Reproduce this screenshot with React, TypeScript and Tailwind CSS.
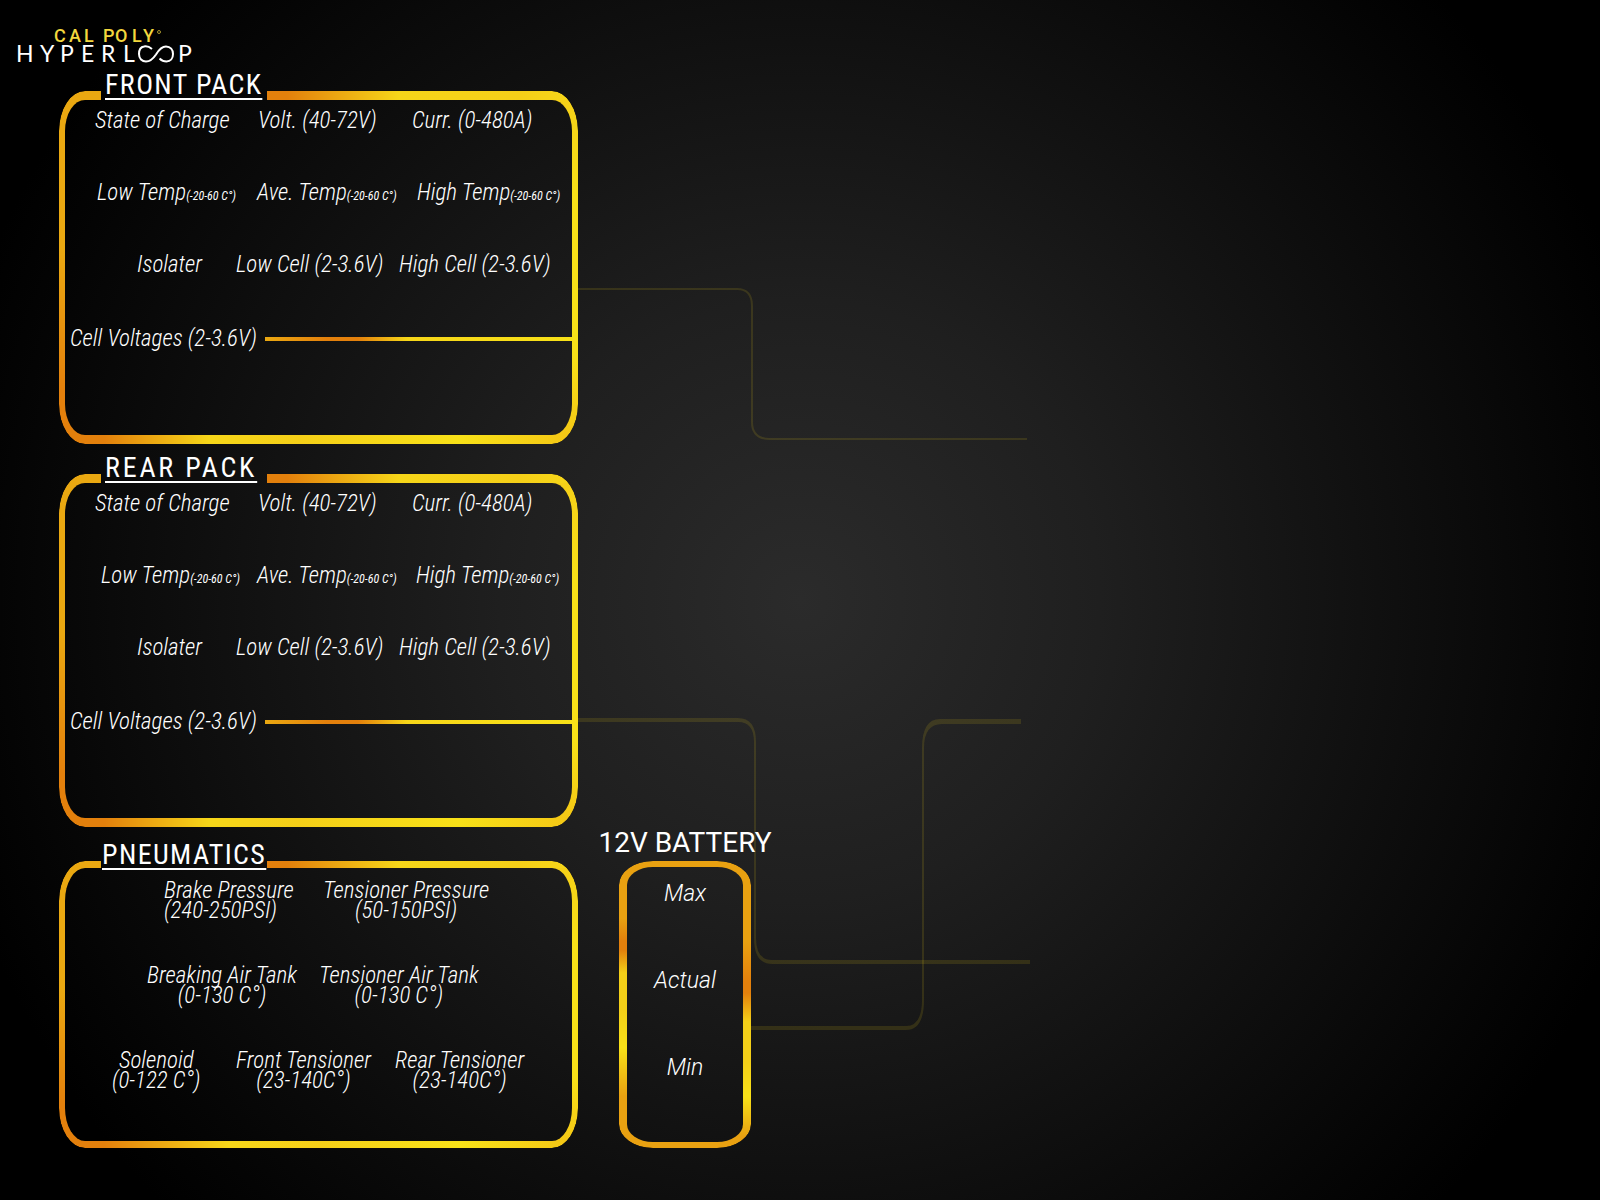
import type { ReactNode } from "react";

const RING =
  "[mask:linear-gradient(#000_0_0)_padding-box_exclude,linear-gradient(#000_0_0)_border-box]";

const PACK_FRAME =
  "border-x-[6px] border-y-[9px] [background:linear-gradient(90deg,#eaa811_42px,transparent_42px,transparent_208px,#e3800c_208px,#e3800c_228px,#f6d619_340px,#f5cf18_460px,#f7d819)_0_0/100%_9px_no-repeat_border-box,linear-gradient(90deg,#e3800c_45px,#f6d619_150px,#f5cf18_240px,#f8e118_400px,#f4c515)_0_100%/100%_9px_no-repeat_border-box,linear-gradient(180deg,#eaa811_45%,#e3800c_85%)_0_0/42px_100%_no-repeat_border-box,linear-gradient(180deg,#f5cf18,#f8e118_30%,#f8e118_75%,#f4c515)_100%_0/42px_100%_no-repeat_border-box]";

const PNEUMATICS_FRAME =
  "border-x-[6px] border-y-[7px] [background:linear-gradient(90deg,#eaa811_42px,transparent_42px,transparent_208px,#e3800c_208px,#e3800c_228px,#f6d619_340px,#f5cf18_460px,#f7d819)_0_0/100%_7px_no-repeat_border-box,linear-gradient(90deg,#e3800c_45px,#f6d619_170px,#f5cf18_260px,#f8e118_400px,#f4c515)_0_100%/100%_7px_no-repeat_border-box,linear-gradient(180deg,#eaa811_45%,#e3800c_85%)_0_0/42px_100%_no-repeat_border-box,linear-gradient(180deg,#f5cf18,#f8e118_30%,#f8e118_75%,#f4c515)_100%_0/42px_100%_no-repeat_border-box]";

const BATTERY_FRAME =
  "border-x-[8px] border-y-[6px] [background:linear-gradient(180deg,#e9a111_20%,#e3800c_28%,#e3800c_31%,#f3cf18_39%,#f3cf18_52%,#f8e118_65%,#e9a111_82%)_0_0/50%_100%_no-repeat_border-box,linear-gradient(180deg,#e9a111_28%,#e3800c_42%,#e3800c_46%,#f3cf18_56%,#f3cf18_70%,#f8e118_82%,#e9a111_96%)_100%_0/50%_100%_no-repeat_border-box]";

type PanelProps = {
  title: string;
  tracking: string;
  titleMargin: string;
  frame: string;
  children: ReactNode;
};

function Panel({ title, tracking, titleMargin, frame, children }: PanelProps) {
  return (
    <section className="relative">
      <div
        aria-hidden="true"
        className={`absolute inset-x-0 top-5 bottom-0 rounded-[26px/40px] border-transparent ${RING} ${frame}`}
      />
      <h2
        className={`relative text-[28px] leading-7 underline decoration-2 underline-offset-4 ${titleMargin} ${tracking}`}
      >
        {title}
      </h2>
      {children}
    </section>
  );
}

function Temp({ label }: { label: string }) {
  return (
    <span>
      {label}
      <small className="text-[12px] leading-none font-normal">(-20-60 C°)</small>
    </span>
  );
}

function Pack({ title, tracking, tempRow }: { title: string; tracking: string; tempRow: string }) {
  return (
    <Panel title={title} tracking={tracking} titleMargin="ml-[46px]" frame={PACK_FRAME}>
      <div className="relative flex flex-col gap-12 pt-[10px] pb-[93px] text-[23px] leading-6 font-light italic">
        <div className="grid grid-cols-[163px_154px_auto] pl-9">
          <span>State of Charge</span>
          <span>Volt. (40-72V)</span>
          <span>Curr. (0-480A)</span>
        </div>
        <div className={`grid ${tempRow}`}>
          <Temp label="Low Temp" />
          <Temp label="Ave. Temp" />
          <Temp label="High Temp" />
        </div>
        <div className="grid grid-cols-[99px_163px_auto] pl-[78px]">
          <span>Isolater</span>
          <span>Low Cell (2-3.6V)</span>
          <span>High Cell (2-3.6V)</span>
        </div>
        <div className="flex items-center gap-1 pt-[2px] pr-1 pl-[11px]">
          <span className="w-[191px]">Cell Voltages (2-3.6V)</span>
          <span className="h-1 flex-1 bg-[linear-gradient(90deg,#eaa811,#e3800c_20%,#e3800c_30%,#f6d619_46%,#f8e118)]" />
        </div>
      </div>
    </Panel>
  );
}

function Reading({ label, range, align }: { label: string; range: string; align: string }) {
  return (
    <span className={`flex w-max flex-col ${align}`}>
      <span>{label}</span>
      <span>{range}</span>
    </span>
  );
}

function Pneumatics() {
  return (
    <Panel
      title="PNEUMATICS"
      tracking="tracking-wider"
      titleMargin="ml-[43px]"
      frame={PNEUMATICS_FRAME}
    >
      <div className="relative flex flex-col gap-[45px] pt-3 pb-[57px] text-[23px] leading-5 font-light italic">
        <div className="grid grid-cols-[159px_auto] pl-[105px]">
          <Reading label="Brake Pressure" range="(240-250PSI)" align="items-start" />
          <Reading label="Tensioner Pressure" range="(50-150PSI)" align="items-center" />
        </div>
        <div className="grid grid-cols-[172px_auto] pl-[88px]">
          <Reading label="Breaking Air Tank" range="(0-130 C°)" align="items-center" />
          <Reading label="Tensioner Air Tank" range="(0-130 C°)" align="items-center" />
        </div>
        <div className="grid grid-cols-[124px_159px_auto] pl-[53px]">
          <Reading label="Solenoid" range="(0-122 C°)" align="items-center" />
          <Reading label="Front Tensioner" range="(23-140C°)" align="items-center" />
          <Reading label="Rear Tensioner" range="(23-140C°)" align="items-center" />
        </div>
      </div>
    </Panel>
  );
}

function Battery() {
  return (
    <section className="flex w-[182px] flex-col items-center gap-1 font-[Roboto,sans-serif]">
      <h2 className="text-[28px] leading-7 whitespace-nowrap">12V BATTERY</h2>
      <div className="relative flex h-[287px] w-[132px] flex-col items-center gap-[63px] pt-[21px] text-[23px] leading-6 font-light italic">
        <div
          aria-hidden="true"
          className={`absolute inset-0 rounded-[34px/24px] border-transparent ${RING} ${BATTERY_FRAME}`}
        />
        <span>Max</span>
        <span>Actual</span>
        <span>Min</span>
      </div>
    </section>
  );
}

function Logo() {
  return (
    <svg width="200" height="70" viewBox="0 0 200 70" role="img" aria-label="Cal Poly Hyperloop">
      <text
        x="54 69 84 97 103 115 132 143"
        y="42"
        className="fill-[#f3d73d] font-[Roboto,sans-serif] text-[18px] font-medium"
      >
        CAL POLY
      </text>
      <circle cx="159" cy="32" r="1.5" fill="none" stroke="#a8952d" />
      <text x="16 40 60 81 101 123" y="62" className="fill-white font-[Lato,sans-serif] text-[23px]">
        HYPERL
      </text>
      <path
        d="M152 49C149 46.500 146 46 144 46.500C140.500 47 139 50 139 54C139 58.500 142 61.500 146 61.500C150 61.500 153 59 156 54.500C159 49.500 162 46.500 166 46.500C170.500 46.500 173 50 173 54C173 58.500 170.500 61.500 166.500 61.500C163.500 61.500 161.500 60.500 159.500 58.500"
        fill="none"
        stroke="#fff"
        strokeWidth="2"
      />
      <text x="178" y="62" className="fill-white font-[Lato,sans-serif] text-[23px]">
        P
      </text>
    </svg>
  );
}

function Connectors() {
  return (
    <svg
      aria-hidden="true"
      width="1040"
      height="1040"
      viewBox="0 0 1040 1040"
      className="pointer-events-none absolute top-0 left-0"
      fill="#f5d51a"
      fillOpacity="0.13"
    >
      <path d="M578 288H737Q753 288 753 306V422Q753 438 770 438H1027V440H770Q751 440 751 422V306Q751 290 737 290H578Z" />
      <path d="M578 718H738Q756 718 756 742V938Q756 960 772 960H1030V964H772Q754 964 754 938V742Q754 722 738 722H578Z" />
      <path d="M751 1026H906Q922 1026 922 1000V748Q922 719 940 719H1021V724H942Q924 724 924 748V1000Q924 1030 906 1030H751Z" />
    </svg>
  );
}

export default function App() {
  return (
    <main className="relative min-h-screen bg-black bg-[radial-gradient(circle_at_center,#2b2b2b,#1f1f1f_300px,#040404_800px,#000_880px)] pb-[51px] font-['Roboto_Condensed',Roboto,sans-serif] text-white">
      <Connectors />
      <header className="relative h-[71px]">
        <Logo />
      </header>
      <div className="relative flex items-end gap-4 pl-[59px]">
        <div className="flex w-[519px] flex-col">
          <Pack
            title="FRONT PACK"
            tracking="tracking-wider"
            tempRow="grid-cols-[160px_160px_auto] pl-[38px]"
          />
          <div className="mt-[10px] mb-[14px]">
            <Pack
              title="REAR PACK"
              tracking="tracking-widest"
              tempRow="grid-cols-[156px_159px_auto] pl-[42px]"
            />
          </div>
          <Pneumatics />
        </div>
        <Battery />
      </div>
    </main>
  );
}
